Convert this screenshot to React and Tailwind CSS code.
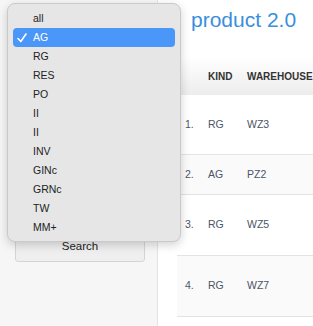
const OPTIONS = ['all', 'AG', 'RG', 'RES', 'PO', 'II', 'II', 'INV', 'GINc', 'GRNc', 'TW', 'MM+']

const ROWS = [
  { n: '1.', kind: 'RG', wh: 'WZ3', h: 'h-[60px]', bg: 'bg-white' },
  { n: '2.', kind: 'AG', wh: 'PZ2', h: 'h-[40px]', bg: 'bg-[#fafafa]' },
  { n: '3.', kind: 'RG', wh: 'WZ5', h: 'h-[61px]', bg: 'bg-white' },
  { n: '4.', kind: 'RG', wh: 'WZ7', h: 'h-[61px]', bg: 'bg-[#fafafa]' },
]

export default function App() {
  return (
    <div className="relative flex h-[326px] w-[313px] overflow-hidden bg-white font-['Liberation_Sans',Arial,sans-serif]">
      {/* Sidebar */}
      <div className="flex w-[158px] shrink-0 flex-col border-r border-[#e2e4e8] bg-[#f6f6f6]">
        <button className="ml-[15px] mt-[232px] h-[30px] w-[130px] rounded-[3px] border border-[#d4d4d4] bg-[#efefef] text-[11.5px] text-[#222]">
          Search
        </button>
      </div>

      {/* Main */}
      <div className="flex-1">
        <h1 className="pl-[33px] pt-[6px] text-[21px] leading-[28px] text-[#3a8fdc]">product 2.0</h1>
        <div className="ml-[19px] mt-[23px] w-[200px]">
          <div className="flex h-[38px] items-center bg-gradient-to-b from-white to-[#ececec] text-[10px] font-bold text-[#333]">
            <div className="w-[23px]" />
            <div className="w-[39px] pl-[8px]">KIND</div>
            <div className="pl-[8px]">WAREHOUSE</div>
          </div>
          {ROWS.map(r => (
            <div key={r.n} className={`flex items-center border-b border-[#e3e3e3] text-[10.5px] text-[#4a5568] ${r.h} ${r.bg}`}>
              <div className="w-[23px] pl-[8px]">{r.n}</div>
              <div className="w-[39px] pl-[8px]">{r.kind}</div>
              <div className="pl-[8px]">{r.wh}</div>
            </div>
          ))}
        </div>
      </div>

      {/* Open select menu */}
      <div className="absolute left-[7px] top-[3px] w-[174px] rounded-[8px] border border-[#cacaca] bg-[#e6e6e7] px-[5px] pb-[4px] pt-[5px] shadow-[0_3px_10px_rgba(0,0,0,0.18)]">
        {OPTIONS.map((o, i) => (
          <div
            key={i}
            className={`relative flex h-[19px] items-center rounded-[4px] pl-[20px] text-[10.5px] ${i === 1 ? 'bg-[#4a96f9] text-white' : 'text-[#222]'}`}
          >
            {i === 1 && (
              <svg className="absolute left-[4px] top-[5px]" width="10" height="10" viewBox="0 0 10 10" fill="none">
                <path d="M1 5.5 L3.8 8.5 L9 1" stroke="white" strokeWidth="1.6" strokeLinecap="round" strokeLinejoin="round" />
              </svg>
            )}
            {o}
          </div>
        ))}
      </div>
    </div>
  )
}
